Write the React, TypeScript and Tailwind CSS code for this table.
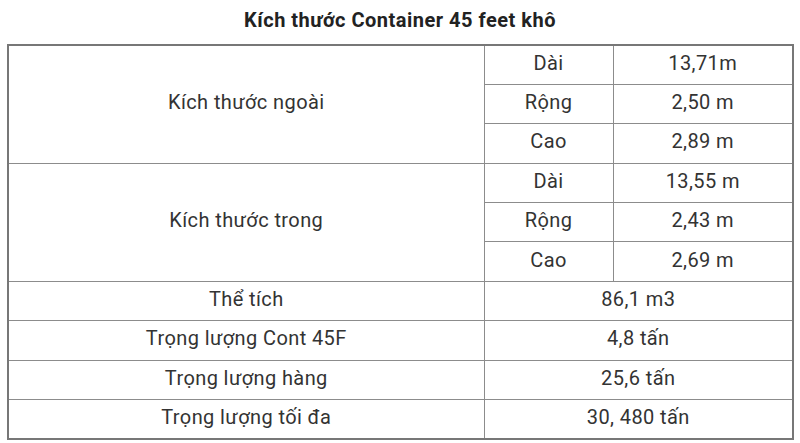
import React from "react";

const cell = "border border-[#8c8c8c] text-center align-middle pb-[4px] p-0";

export default function App() {
  const rowH = "h-[39.4px]";
  return (
    <div className="w-[800px] h-[443px] bg-white overflow-hidden" style={{ fontFamily: "Roboto, 'Liberation Sans', sans-serif" }}>
      <div className="h-[44px] flex items-center justify-center pb-[4px]">
        <h1 className="text-[20px] font-bold text-[#222] leading-none tracking-[0.5px]">Kích thước Container 45 feet khô</h1>
      </div>
      <div className="ml-[7px] w-[785px]">
        <table className="w-full border-collapse border-2 border-[#777] text-[20px] text-[#333] table-fixed tracking-[0.4px]">
          <colgroup>
            <col className="w-[476px]" />
            <col className="w-[129px]" />
            <col className="w-[180px]" />
          </colgroup>
          <tbody>
            <tr className={rowH}>
              <td rowSpan={3} className={cell}>Kích thước ngoài</td>
              <td className={cell}>Dài</td>
              <td className={cell}>13,71m</td>
            </tr>
            <tr className={rowH}>
              <td className={cell}>Rộng</td>
              <td className={cell}>2,50 m</td>
            </tr>
            <tr className={rowH}>
              <td className={cell}>Cao</td>
              <td className={cell}>2,89 m</td>
            </tr>
            <tr className={rowH}>
              <td rowSpan={3} className={cell}>Kích thước trong</td>
              <td className={cell}>Dài</td>
              <td className={cell}>13,55 m</td>
            </tr>
            <tr className={rowH}>
              <td className={cell}>Rộng</td>
              <td className={cell}>2,43 m</td>
            </tr>
            <tr className={rowH}>
              <td className={cell}>Cao</td>
              <td className={cell}>2,69 m</td>
            </tr>
            <tr className={rowH}>
              <td className={cell}>Thể tích</td>
              <td colSpan={2} className={cell}>86,1 m3</td>
            </tr>
            <tr className={rowH}>
              <td className={cell}>Trọng lượng Cont 45F</td>
              <td colSpan={2} className={cell}>4,8 tấn</td>
            </tr>
            <tr className={rowH}>
              <td className={cell}>Trọng lượng hàng</td>
              <td colSpan={2} className={cell}>25,6 tấn</td>
            </tr>
            <tr className={rowH}>
              <td className={cell}>Trọng lượng tối đa</td>
              <td colSpan={2} className={cell}>30, 480 tấn</td>
            </tr>
          </tbody>
        </table>
      </div>
    </div>
  );
}
